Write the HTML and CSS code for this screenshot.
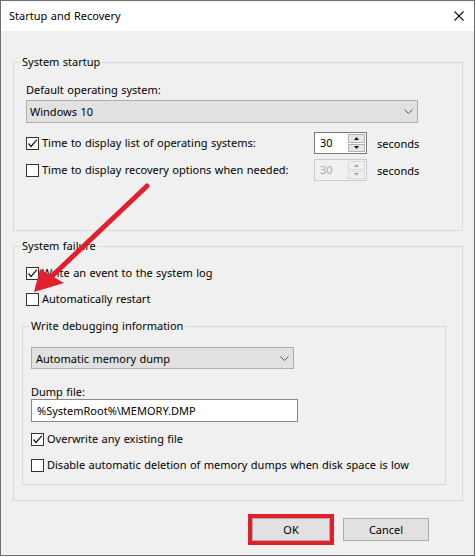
FILE: index.html
```html
<!DOCTYPE html>
<html lang="en">
<head>
<meta charset="utf-8">
<title>Startup and Recovery</title>
<link rel="stylesheet" href="styles.css">
</head>
<body>
<div class="window">
  <div class="titlebar">
    <span class="title">Startup and Recovery</span>
    <svg class="close" width="10" height="10" viewBox="0 0 10 10"><path d="M0.5 0.5L9.5 9.5M9.5 0.5L0.5 9.5" stroke="#111" stroke-width="1.1" fill="none"/></svg>
  </div>
  <div class="content">
    <fieldset class="group startup">
      <legend>System startup</legend>
      <div class="gbody startup-body">
        <div class="label">Default operating system:</div>
        <div class="select wide">
          <span>Windows 10</span>
          <svg class="chev" width="9" height="5" viewBox="0 0 9 5"><path d="M0.5 0.5L4.5 4.5L8.5 0.5" stroke="#555" stroke-width="1" fill="none"/></svg>
        </div>
        <div class="timerow first">
          <label class="check"><span class="cb"><svg width="11" height="11" viewBox="0 0 11 11"><path d="M1.5 5.5L4 8.5L9.8 1.8" stroke="#111" stroke-width="1.2" fill="none"/></svg></span>Time to display list of operating systems:</label>
          <div class="spin">
            <span class="spin-val">30</span>
            <span class="spin-btns">
              <span class="sbtn"><svg width="5" height="3" viewBox="0 0 5 3"><path d="M0 3L2.5 0L5 3Z" fill="#111"/></svg></span>
              <span class="sbtn"><svg width="5" height="3" viewBox="0 0 5 3"><path d="M0 0L2.5 3L5 0Z" fill="#111"/></svg></span>
            </span>
          </div>
          <span class="unit">seconds</span>
        </div>
        <div class="timerow second">
          <label class="check"><span class="cb"></span>Time to display recovery options when needed:</label>
          <div class="spin disabled">
            <span class="spin-val">30</span>
            <span class="spin-btns">
              <span class="sbtn"><svg width="5" height="3" viewBox="0 0 5 3"><path d="M0 3L2.5 0L5 3Z" fill="#a8a8a8"/></svg></span>
              <span class="sbtn"><svg width="5" height="3" viewBox="0 0 5 3"><path d="M0 0L2.5 3L5 0Z" fill="#a8a8a8"/></svg></span>
            </span>
          </div>
          <span class="unit">seconds</span>
        </div>
      </div>
    </fieldset>

    <fieldset class="group failure">
      <legend>System failure</legend>
      <div class="gbody failure-body">
        <label class="check"><span class="cb"><svg width="11" height="11" viewBox="0 0 11 11"><path d="M1.5 5.5L4 8.5L9.8 1.8" stroke="#111" stroke-width="1.2" fill="none"/></svg></span>Write an event to the system log</label>
        <label class="check restart"><span class="cb"></span>Automatically restart</label>
        <fieldset class="group debug">
          <legend>Write debugging information</legend>
          <div class="gbody debug-body">
            <div class="select narrow">
              <span>Automatic memory dump</span>
              <svg class="chev" width="9" height="5" viewBox="0 0 9 5"><path d="M0.5 0.5L4.5 4.5L8.5 0.5" stroke="#555" stroke-width="1" fill="none"/></svg>
            </div>
            <div class="label dump-label">Dump file:</div>
            <div class="textbox">%SystemRoot%\MEMORY.DMP</div>
            <label class="check overwrite"><span class="cb"><svg width="11" height="11" viewBox="0 0 11 11"><path d="M1.5 5.5L4 8.5L9.8 1.8" stroke="#111" stroke-width="1.2" fill="none"/></svg></span>Overwrite any existing file</label>
            <label class="check disable"><span class="cb"></span>Disable automatic deletion of memory dumps when disk space is low</label>
          </div>
        </fieldset>
      </div>
    </fieldset>

    <div class="buttons">
      <button class="btn ok">OK</button>
      <button class="btn cancel">Cancel</button>
    </div>
  </div>

  <svg class="annot" width="474" height="555" viewBox="1 1 474 555">
    <line x1="147" y1="186" x2="50" y2="278" stroke="#e2202c" stroke-width="5" stroke-linecap="round"/>
    <path d="M34 292L40 269L64 283Z" fill="#e2202c"/>
  </svg>
</div>
</body>
</html>
```

FILE: styles.css
```css
html, body {
  margin: 0;
  padding: 0;
  background: #ffffff;
}

body {
  font-family: "Noto Sans", "Open Sans", sans-serif;
  font-size: 11px;
  word-spacing: 0.6px;
  color: #000;
}

.window {
  position: relative;
  width: 475px;
  height: 556px;
  box-sizing: border-box;
  border: 1px solid #6e6e6e;
  background: #f0f0f0;
  display: flex;
  flex-direction: column;
}

.titlebar {
  height: 30px;
  background: #ffffff;
  display: flex;
  align-items: center;
  justify-content: space-between;
  padding: 0 10px 0 8px;
}

.title {
  font-size: 11px;
  line-height: 30px;
}

.content {
  display: flex;
  flex-direction: column;
  padding: 0 11px 0 12px;
}

.group {
  margin: 0;
  padding: 0;
  border: 1px solid #d9d9d9;
  min-width: 0;
}

.group legend {
  margin-left: 6px;
  padding: 0 2px;
  line-height: 14px;
  font-size: 11px;
}

.startup {
  margin-top: 24px;
}

.failure {
  margin-top: 8px;
}

.gbody {
  display: flex;
  flex-direction: column;
  align-items: flex-start;
}

.startup-body {
  padding: 14px 12px 49px;
}

.failure-body {
  padding: 12px 0 15px 12px;
}

.label {
  line-height: 14px;
}

.select {
  box-sizing: border-box;
  height: 23px;
  margin-top: 3px;
  background: #e1e1e1;
  border: 1px solid #adadad;
  display: flex;
  align-items: center;
  justify-content: space-between;
  padding: 0 4px 0 3px;
}

.select.wide {
  width: 392px;
}

.select.narrow {
  width: 263px;
  height: 22px;
  margin-top: 0;
  padding-left: 4px;
}

.chev {
  display: block;
}

.timerow {
  display: grid;
  grid-template-columns: 288px 53px auto;
  align-items: center;
}

.timerow.first {
  margin-top: 9px;
}

.timerow.second {
  margin-top: 5px;
}

.unit {
  margin-left: 10px;
}

.check {
  display: flex;
  align-items: center;
  gap: 3px;
  line-height: 16px;
}

.cb {
  box-sizing: border-box;
  width: 13px;
  height: 13px;
  border: 1px solid #333;
  background: #fff;
  display: flex;
  flex: none;
}

.cb svg {
  display: block;
}

.restart {
  margin-top: 10px;
}

.spin {
  box-sizing: border-box;
  width: 53px;
  height: 22px;
  border: 1px solid #7a7a7a;
  background: #fff;
  display: flex;
  align-items: stretch;
}

.spin-val {
  flex: 1;
  padding-left: 5px;
  line-height: 20px;
}

.spin-btns {
  width: 17px;
  display: flex;
  flex-direction: column;
  gap: 1px;
  padding: 1px 1px 1px 0;
}

.sbtn {
  flex: 1;
  background: #e6e6e6;
  border: 1px solid #b4b4b4;
  display: flex;
  align-items: center;
  justify-content: center;
}

.sbtn svg {
  display: block;
}

.spin.disabled {
  border-color: #cccccc;
  background: #f0f0f0;
  color: #a8a8a8;
}

.spin.disabled .sbtn {
  background: #f0f0f0;
  border-color: #d9d9d9;
}

.debug {
  margin-top: 12px;
  margin-left: -4px;
  width: 424px;
  box-sizing: border-box;
}

.debug-body {
  padding: 14px 0 11px 8px;
}

.dump-label {
  margin-top: 16px;
}

.textbox {
  box-sizing: border-box;
  width: 267px;
  height: 23px;
  background: #fff;
  border: 1px solid #8a8a8a;
  padding-left: 5px;
  line-height: 21px;
}

.overwrite {
  margin-top: 9px;
}

.disable {
  margin-top: 10px;
}

.buttons {
  display: flex;
  justify-content: flex-end;
  gap: 13px;
  margin-top: 17px;
  padding-right: 34px;
}

.btn {
  box-sizing: border-box;
  height: 23px;
  background: #e1e1e1;
  border: 1px solid #adadad;
  font-family: "Noto Sans", "Open Sans", sans-serif;
  font-size: 11px;
  color: #000;
  padding: 0;
}

.btn.ok {
  width: 78px;
  outline: 4px solid #e2202c;
}

.btn.cancel {
  width: 86px;
}

.annot {
  position: absolute;
  left: 0;
  top: 0;
  pointer-events: none;
}
```
